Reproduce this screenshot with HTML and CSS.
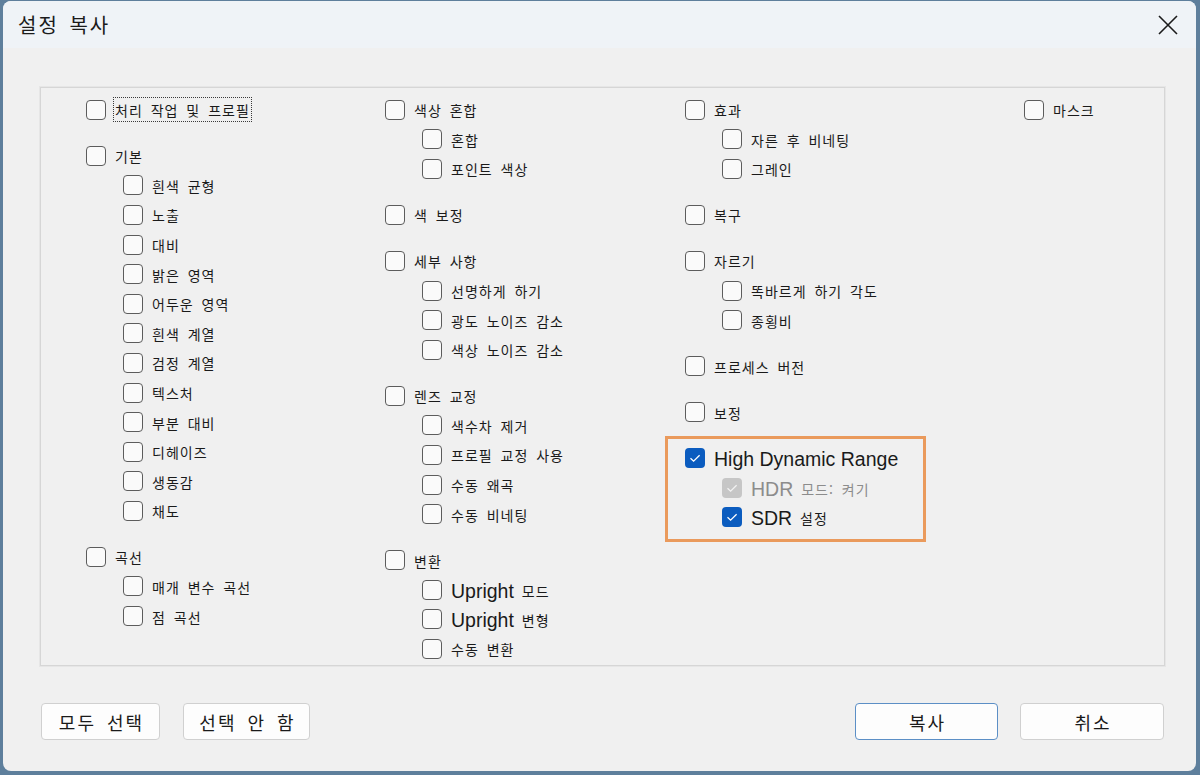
FILE: index.html
```html
<!DOCTYPE html>
<html lang="ko">
  <head>
    <meta charset="UTF-8" />
    <meta name="viewport" content="width=device-width, initial-scale=1.0" />
    <title>설정 복사</title>
    <link rel="stylesheet" href="styles.css">
  </head>

  <body>
    <div class="window">
      <div class="titlebar">
        <span class="title">설정 복사</span>
        <span class="close">
          <svg width="20" height="20" viewBox="0 0 20 20">
            <path d="M1 1 L19 19 M19 1 L1 19" stroke="#1b1b1b" stroke-width="1.6" fill="none" />
          </svg>
        </span>
      </div>

      <div class="content">
        <div class="panel">
          <!-- 1 -->
          <div class="col">
            <div class="group">
              <div class="item"><span class="box"></span><span class="label focus">처리 작업 및 프로필</span></div>
            </div>
            <div class="group">
              <div class="item"><span class="box"></span><span class="label">기본</span></div>
              <div class="item sub"><span class="box"></span><span class="label">흰색 균형</span></div>
              <div class="item sub"><span class="box"></span><span class="label">노출</span></div>
              <div class="item sub"><span class="box"></span><span class="label">대비</span></div>
              <div class="item sub"><span class="box"></span><span class="label">밝은 영역</span></div>
              <div class="item sub"><span class="box"></span><span class="label">어두운 영역</span></div>
              <div class="item sub"><span class="box"></span><span class="label">흰색 계열</span></div>
              <div class="item sub"><span class="box"></span><span class="label">검정 계열</span></div>
              <div class="item sub"><span class="box"></span><span class="label">텍스처</span></div>
              <div class="item sub"><span class="box"></span><span class="label">부분 대비</span></div>
              <div class="item sub"><span class="box"></span><span class="label">디헤이즈</span></div>
              <div class="item sub"><span class="box"></span><span class="label">생동감</span></div>
              <div class="item sub"><span class="box"></span><span class="label">채도</span></div>
            </div>
            <div class="group">
              <div class="item"><span class="box"></span><span class="label">곡선</span></div>
              <div class="item sub"><span class="box"></span><span class="label">매개 변수 곡선</span></div>
              <div class="item sub"><span class="box"></span><span class="label">점 곡선</span></div>
            </div>
          </div>

          <!-- 2 -->
          <div class="col">
            <div class="group">
              <div class="item"><span class="box"></span><span class="label">색상 혼합</span></div>
              <div class="item sub"><span class="box"></span><span class="label">혼합</span></div>
              <div class="item sub"><span class="box"></span><span class="label">포인트 색상</span></div>
            </div>
            <div class="group">
              <div class="item"><span class="box"></span><span class="label">색 보정</span></div>
            </div>
            <div class="group">
              <div class="item"><span class="box"></span><span class="label">세부 사항</span></div>
              <div class="item sub"><span class="box"></span><span class="label">선명하게 하기</span></div>
              <div class="item sub"><span class="box"></span><span class="label">광도 노이즈 감소</span></div>
              <div class="item sub"><span class="box"></span><span class="label">색상 노이즈 감소</span></div>
            </div>
            <div class="group">
              <div class="item"><span class="box"></span><span class="label">렌즈 교정</span></div>
              <div class="item sub"><span class="box"></span><span class="label">색수차 제거</span></div>
              <div class="item sub"><span class="box"></span><span class="label">프로필 교정 사용</span></div>
              <div class="item sub"><span class="box"></span><span class="label">수동 왜곡</span></div>
              <div class="item sub"><span class="box"></span><span class="label">수동 비네팅</span></div>
            </div>
            <div class="group">
              <div class="item"><span class="box"></span><span class="label">변환</span></div>
              <div class="item sub"><span class="box"></span><span class="label"><span class="latin">Upright</span> 모드</span></div>
              <div class="item sub"><span class="box"></span><span class="label"><span class="latin">Upright</span> 변형</span></div>
              <div class="item sub"><span class="box"></span><span class="label">수동 변환</span></div>
            </div>
          </div>

          <!-- 3 -->
          <div class="col">
            <div class="group">
              <div class="item"><span class="box"></span><span class="label">효과</span></div>
              <div class="item sub"><span class="box"></span><span class="label">자른 후 비네팅</span></div>
              <div class="item sub"><span class="box"></span><span class="label">그레인</span></div>
            </div>
            <div class="group">
              <div class="item"><span class="box"></span><span class="label">복구</span></div>
            </div>
            <div class="group">
              <div class="item"><span class="box"></span><span class="label">자르기</span></div>
              <div class="item sub"><span class="box"></span><span class="label">똑바르게 하기 각도</span></div>
              <div class="item sub"><span class="box"></span><span class="label">종횡비</span></div>
            </div>
            <div class="group">
              <div class="item"><span class="box"></span><span class="label">프로세스 버전</span></div>
            </div>
            <div class="group">
              <div class="item"><span class="box"></span><span class="label">보정</span></div>
            </div>
            <div class="group hdr">
              <div class="item">
                <span class="box checked">
                  <svg width="20" height="20" viewBox="0 0 20 20"><path d="M5.5 10.2 L8.6 13.2 L14.6 7.2" stroke="#fff" stroke-width="1.3" fill="none" /></svg>
                </span>
                <span class="label"><span class="latin">High Dynamic Range</span></span>
              </div>
              <div class="item sub disabled">
                <span class="box checked">
                  <svg width="20" height="20" viewBox="0 0 20 20"><path d="M5.5 10.2 L8.6 13.2 L14.6 7.2" stroke="#f2f2f2" stroke-width="1.3" fill="none" /></svg>
                </span>
                <span class="label"><span class="latin">HDR</span> 모드: 켜기</span>
              </div>
              <div class="item sub">
                <span class="box checked">
                  <svg width="20" height="20" viewBox="0 0 20 20"><path d="M5.5 10.2 L8.6 13.2 L14.6 7.2" stroke="#fff" stroke-width="1.3" fill="none" /></svg>
                </span>
                <span class="label"><span class="latin">SDR</span> 설정</span>
              </div>
            </div>
          </div>

          <!-- 4 -->
          <div class="col">
            <div class="group">
              <div class="item"><span class="box"></span><span class="label">마스크</span></div>
            </div>
          </div>
        </div>

        <div class="actions">
          <div class="btn-group">
            <button class="btn select-all">모두 선택</button>
            <button class="btn select-none">선택 안 함</button>
          </div>
          <div class="btn-group">
            <button class="btn wide default">복사</button>
            <button class="btn wide">취소</button>
          </div>
        </div>
      </div>
    </div>
  </body>
</html>
```

FILE: styles.css
```css
html,
body {
  margin: 0;
  height: 100%;
}

body {
  background-color: #5e7f9c;
  padding: 1px 4px 4px 3px;
  box-sizing: border-box;
  font-family: "Noto Sans CJK KR", "Noto Sans", sans-serif;
  color: #1a1a1a;
}

.window {
  height: 770px;
  background-color: #f0f0f0;
  border-radius: 8px;
  overflow: hidden;
}

.titlebar {
  display: flex;
  justify-content: space-between;
  align-items: center;
  height: 47px;
  padding: 0 18px 0 15px;
  background-color: #eff3f7;
}

.title {
  font-size: 20px;
  letter-spacing: 2px;
  word-spacing: 3px;
  color: #1b1b1b;
}

.close {
  display: flex;
  margin-top: 1px;
}

.content {
  padding: 39px 31px 0 37px;
}

.panel {
  display: grid;
  grid-template-columns: 299px 300px 339px auto;
  height: 579px;
  box-sizing: border-box;
  padding: 7px 0 0 45px;
  border: 1px solid #d6d6d6;
  box-shadow: 0 0 0 1px #e6e6e6;
}

.group + .group {
  margin-top: 16.4px;
}

.item {
  display: flex;
  align-items: center;
  height: 29.6px;
}

.sub {
  padding-left: 37px;
}

.box {
  flex: none;
  display: flex;
  width: 20px;
  height: 20px;
  box-sizing: border-box;
  border: 1px solid #5c5c5c;
  border-radius: 4px;
  background-color: #fafafa;
}

.box svg {
  margin: -1px;
}

.box.checked {
  border: none;
  background-color: #0b5cbf;
}

.box.checked svg {
  margin: 0;
}

.disabled .box.checked {
  background-color: #c6c6c6;
}

.label {
  margin-left: 7px;
  padding: 4px 1px 2px;
  border: 1px dotted transparent;
  font-size: 14px;
  line-height: 17px;
  letter-spacing: 1px;
  word-spacing: 3px;
  white-space: nowrap;
}

.label.focus {
  border-color: #3a3a3a;
}

.latin {
  font-family: "Liberation Sans", Arial, sans-serif;
  font-size: 19.5px;
  letter-spacing: 0;
  word-spacing: 0;
  position: relative;
  top: 1px;
}

.disabled .label {
  color: #8c8c8c;
}

.hdr {
  position: relative;
}

/* orange highlight round the HDR group */
.hdr::after {
  content: "";
  position: absolute;
  top: -7.6px;
  left: -20px;
  width: 261px;
  height: 106px;
  box-sizing: border-box;
  border: 3px solid #ea9a5c;
}

.actions {
  display: flex;
  justify-content: space-between;
  margin-top: 37px;
  padding: 0 1px;
}

.btn-group {
  display: flex;
  gap: 23px;
}

.btn-group + .btn-group {
  gap: 22px;
}

.btn {
  height: 37px;
  padding: 0 0 0 2px;
  background-color: #fdfdfd;
  border: 1px solid #d0d0d0;
  border-radius: 4px;
  font-family: "Noto Sans CJK KR", "Noto Sans", sans-serif;
  font-size: 18px;
  letter-spacing: 2px;
  word-spacing: 4px;
  color: #1a1a1a;
}

.select-all {
  width: 119px;
}

.select-none {
  width: 127px;
}

.wide {
  width: 144px;
}

.default {
  width: 143px;
  border-color: #5c8fc6;
}
```
